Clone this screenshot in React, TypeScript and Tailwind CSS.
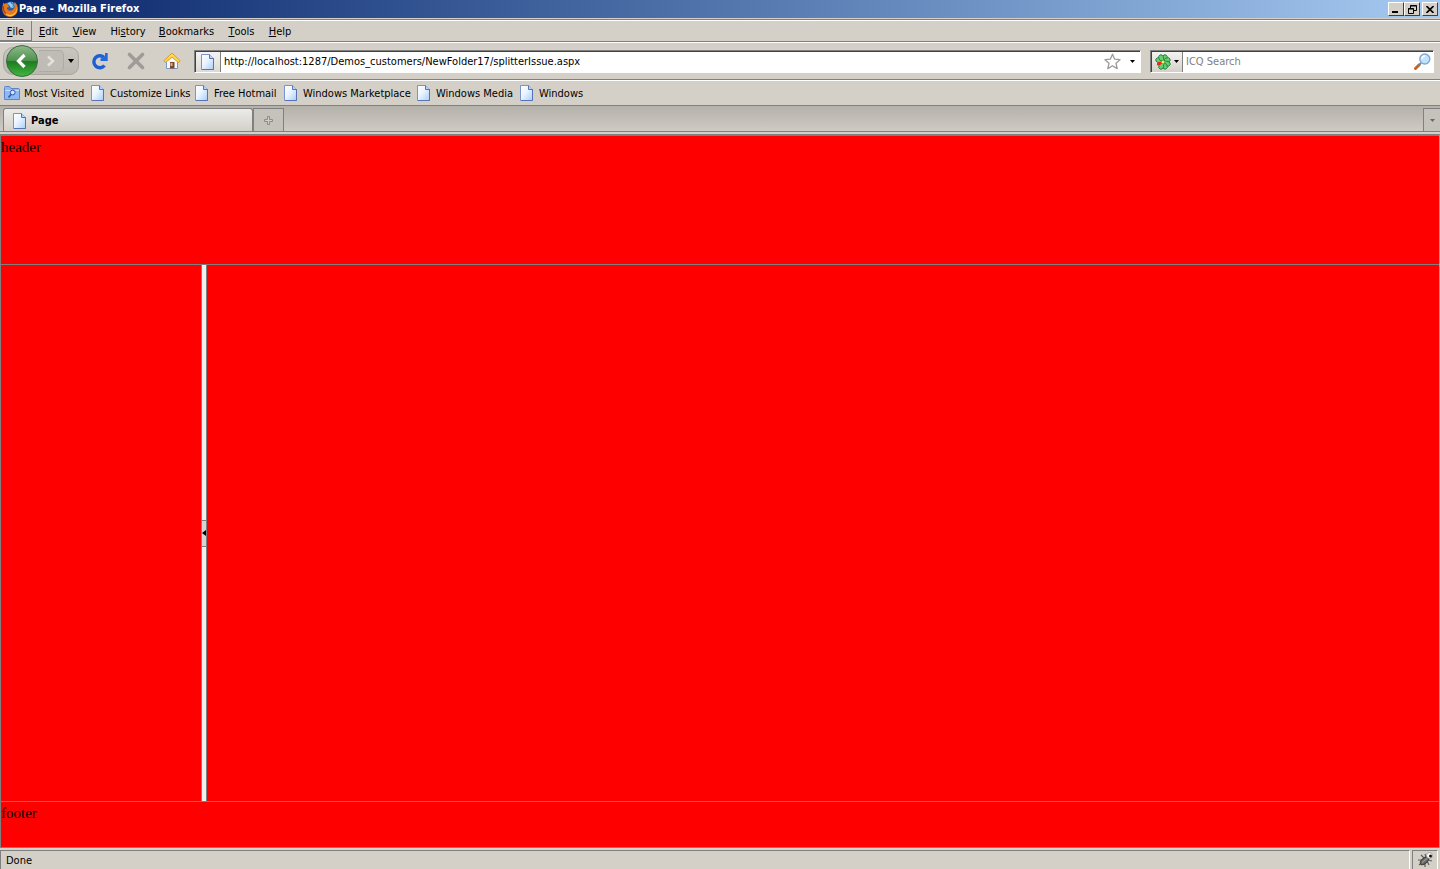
import React from "react";

const menus = [
  { key: "F", before: "", after: "ile", width: "w-[32px]" },
  { key: "E", before: "", after: "dit", width: "w-[33px]" },
  { key: "V", before: "", after: "iew", width: "w-[39px]" },
  { key: "s", before: "Hi", after: "tory", width: "w-[48px]" },
  { key: "B", before: "", after: "ookmarks", width: "w-[69px]" },
  { key: "T", before: "", after: "ools", width: "w-[41px]" },
  { key: "H", before: "", after: "elp", width: "w-[36px]" },
];

const bookmarks = [
  { label: "Customize Links", width: "w-[104px]" },
  { label: "Free Hotmail", width: "w-[89px]" },
  { label: "Windows Marketplace", width: "w-[133px]" },
  { label: "Windows Media", width: "w-[103px]" },
  { label: "Windows", width: "w-[70px]" },
];

function PageIcon() {
  return (
    <svg width="14" height="16" viewBox="0 0 14 16" className="shrink-0" aria-hidden="true">
      <defs>
        <linearGradient id="paper" x1="0" y1="0" x2="1" y2="1">
          <stop offset="0" stopColor="#fff" />
          <stop offset=".45" stopColor="#eaf4ff" />
          <stop offset="1" stopColor="#a9cdfa" />
        </linearGradient>
      </defs>
      <path d="M.5.5h8l4 4v11H.5z" fill="url(#paper)" stroke="#7b93c9" />
      <path d="M12.500 4v11.500H1" fill="none" stroke="#5673b5" />
      <path d="M8.500.5v4h4" fill="#b9d6fa" stroke="#5673b5" />
    </svg>
  );
}

function FirefoxIcon() {
  return (
    <svg width="16" height="16" viewBox="0 0 16 16" className="shrink-0" aria-hidden="true">
      <circle cx="8.500" cy="7" r="6.500" fill="#2a62ae" />
      <path d="M5.500 2.500c2-2 5.500-1.800 7.500.5l-1.500 4-3-.5-1-2z" fill="#8fd0f2" />
      <path d="M9 1l1 2 2-.5-1 3 2 2" stroke="#2f6fb8" fill="none" />
      <path d="M1.500 1.500c.4 1 .8 1.200 1.500 1.300C4 2.200 5 2.200 6 2.600 5.400 3.600 5.800 4.400 7 5c-.3 1.200-1.500 1.200-2.200 2 .2 1.800 1.800 3 3.700 2.800 2.300-.2 4-2 4.200-4.500.2-1.600 0-3-.2-4.200C15 3 16 5.500 15.800 8.500 15.500 12.800 12.200 15.800 8 15.800 3.500 15.800.3 12.500.3 8.200.3 5.800.7 3.500 1.500 1.500z" fill="#e8761b" />
      <path d="M14.500 4.500c1 4-1 8.500-5.500 9.300-3 .5-5.500-1-6.500-3 1 3.200 3.500 4.700 6.500 4.400 4.500-.5 7.300-5.200 5.500-10.700z" fill="#fbc637" />
      <path d="M1.500 5C1 8 2 11 4 12.500" stroke="#b73a12" strokeWidth="1.200" fill="none" />
    </svg>
  );
}

function DownArrow({ className = "" }: { className?: string }) {
  return (
    <svg width="5" height="3" viewBox="0 0 5 3" className={className} aria-hidden="true">
      <path d="M0 0h5L2.500 3z" fill="currentColor" />
    </svg>
  );
}

function BackForward() {
  return (
    <div className="flex h-[28px] w-[76px] items-center rounded-l-[10px] rounded-r-[9px] border border-[#a9a6a0] bg-linear-to-b from-[#c9c6c0] to-[#bab7b1]">
      <button aria-label="Back" className="ml-px shrink-0">
        <svg width="34" height="34" viewBox="0 0 34 34" aria-hidden="true">
          <defs>
            <linearGradient id="back" x1="0" y1="0" x2="0" y2="1">
              <stop offset="0" stopColor="#8fb98a" />
              <stop offset=".48" stopColor="#4f9350" />
              <stop offset=".52" stopColor="#1f7a22" />
              <stop offset="1" stopColor="#43b83f" />
            </linearGradient>
          </defs>
          <circle cx="17" cy="17" r="15.500" fill="url(#back)" stroke="#3c6a40" />
          <path d="M19.500 11l-6 6 6 6" fill="none" stroke="#fff" strokeWidth="3.200" />
        </svg>
      </button>
      <button aria-label="Forward" className="flex h-[22px] w-[25px] shrink-0 items-center justify-center rounded-r-[5px] border border-l-0 border-[#aeaba5] bg-[#bfbcb6]">
        <svg width="10" height="12" viewBox="0 0 10 12" aria-hidden="true">
          <path d="M2 1.500L7 6l-5 4.500" fill="none" stroke="#e4e2de" strokeWidth="2.500" />
        </svg>
      </button>
      <button aria-label="Recent pages" className="flex h-5 flex-1 items-center justify-center">
        <svg width="6" height="4" viewBox="0 0 6 4" aria-hidden="true"><path d="M0 0h6L3 4z" /></svg>
      </button>
    </div>
  );
}

function ReloadIcon() {
  return (
    <svg width="18" height="18" viewBox="0 0 18 18" aria-hidden="true">
      <path d="M12.800 5.200A6 6 0 1 0 13.500 13.500" fill="none" stroke="#1d5fd3" strokeWidth="3.400" />
      <path d="M16.700 1v8H9.500V6.500l2.700-.7L14 3.500V1z" fill="#2468dc" />
    </svg>
  );
}

function StopIcon() {
  return (
    <svg width="18" height="18" viewBox="0 0 18 18" aria-hidden="true">
      <path d="M2.500 2.500l13 13M15.500 2.500l-13 13" stroke="#9f9c97" strokeWidth="3.600" strokeLinecap="round" />
    </svg>
  );
}

function HomeIcon() {
  return (
    <svg width="18" height="18" viewBox="0 0 18 18" aria-hidden="true">
      <path d="M3.500 9v7.500h11V9L9 4z" fill="#f6f8fc" stroke="#7d97c9" />
      <path d="M9 1L.8 8.800l1.700 1.700L9 5.200l6.500 5.300 1.700-1.700z" fill="#ffd64f" stroke="#dd9c25" />
      <path d="M7 10h4.500v6.500H7z" fill="#7a4a2c" />
      <path d="M7.500 11h2v3h-2z" fill="#d9b48a" />
    </svg>
  );
}

function StarIcon() {
  return (
    <svg width="17" height="17" viewBox="0 0 17 17" aria-hidden="true">
      <path d="M8.500 1.200l2.200 5 5.300.5-4 3.600 1.200 5.300-4.700-2.800-4.700 2.800L5 10.300 1 6.700l5.300-.5z" fill="#fff" stroke="#9b9b9b" strokeWidth="1.300" strokeLinejoin="round" />
    </svg>
  );
}

function FlowerIcon() {
  const petals = [22, 67, 112, 157, 202, 292, 337];
  return (
    <svg width="16" height="16" viewBox="0 0 16 16" aria-hidden="true">
      {petals.map((a) => (
        <ellipse key={a} cx="8" cy="3.500" rx="2.400" ry="3.200" fill="#62d070" stroke="#26793a" strokeWidth=".8" transform={`rotate(${a} 8 8)`} />
      ))}
      <ellipse cx="8" cy="4" rx="1.600" ry="2.600" fill="#ee2418" transform="rotate(247 8 8)" />
      <circle cx="8" cy="8" r="1.500" fill="#f7ea5a" />
    </svg>
  );
}

function MagnifierIcon() {
  return (
    <svg width="17" height="17" viewBox="0 0 17 17" aria-hidden="true">
      <path d="M1.500 15.500L5 12" stroke="#c8641b" strokeWidth="3" strokeLinecap="round" />
      <path d="M4.500 12.500l2.500-2.500" stroke="#7a7f8e" strokeWidth="2" />
      <circle cx="10.800" cy="6" r="5" fill="#bfe3fb" stroke="#7fa6dc" strokeWidth="1.400" />
      <path d="M8 6c0-2 1.200-3 3-3" fill="none" stroke="#fff" strokeWidth="1.500" />
    </svg>
  );
}

function BugIcon() {
  return (
    <svg width="17" height="16" viewBox="0 0 17 16" aria-hidden="true">
      <path d="M4 3l3 3M8 2l1 3M1 8l5 0M2 13l4-3M8 15l0-5M12 13l-2-4M15 9l-4-1" stroke="#5c5c5a" strokeWidth="1.200" />
      <ellipse cx="7.500" cy="8.800" rx="5" ry="2.600" transform="rotate(-42 7.500 8.800)" fill="#6d6d6a" stroke="#3c3c3a" />
      <path d="M5 10.500l5-4" stroke="#a4a4a0" />
      <circle cx="12.500" cy="3.500" r="3" fill="#f8f8f5" stroke="#888" strokeWidth=".7" />
      <circle cx="13.500" cy="4" r="1.500" fill="#111" />
    </svg>
  );
}

const caption =
  "flex h-[14px] w-4 items-center justify-center border border-t-white border-l-white border-r-[#404040] border-b-[#404040] bg-[#d4d0c8]";

export default function App() {
  return (
    <div className="flex min-h-screen flex-col bg-[#d4d0c8] font-['DejaVu_Sans_Condensed','DejaVu_Sans',sans-serif] text-[11px] leading-[14px] text-black">
      <header className="flex h-[18px] items-center bg-linear-to-r from-[#0a246a] to-[#a6caf0] pr-[2px] pl-[2px]">
        <FirefoxIcon />
        <h1 className="ml-px flex-1 font-bold text-white">Page - Mozilla Firefox</h1>
        <button aria-label="Minimize" className={caption}>
          <svg width="10" height="8" viewBox="0 0 10 8" aria-hidden="true"><path d="M1 6h6v2H1z" /></svg>
        </button>
        <button aria-label="Restore" className={caption}>
          <svg width="9" height="9" viewBox="0 0 9 9" aria-hidden="true">
            <path d="M2.500 3V.5h6v5H6M2 1h7" fill="none" stroke="#000" />
            <path d="M.5 3.500h5v5h-5zM0 4h6" fill="none" stroke="#000" />
          </svg>
        </button>
        <button aria-label="Close" className={`${caption} ml-[2px]`}>
          <svg width="8" height="7" viewBox="0 0 8 7" aria-hidden="true"><path d="M.5 0l7 7M7.500 0l-7 7" stroke="#000" strokeWidth="1.600" /></svg>
        </button>
      </header>

      <nav aria-label="Menu bar" className="mt-px flex h-[23px] border-y border-t-[#808080] border-b-[#808080]">
        <div className="flex flex-1 border-t border-white">
          {menus.map((m, i) => (
            <button
              key={m.after}
              className={`${m.width} flex shrink-0 items-center justify-center pt-[2px] whitespace-pre ${i === 0 ? "border-r border-b border-[#808080]" : ""}`}
            >
              {m.before}<span className="underline underline-offset-1">{m.key}</span>{m.after}
            </button>
          ))}
        </div>
      </nav>

      <div className="flex h-[38px] items-center border-t border-b border-t-white border-b-[#808080] pr-[6px] pl-[3px]">
        <BackForward />
        <button aria-label="Reload" className="ml-3"><ReloadIcon /></button>
        <button aria-label="Stop" className="ml-[18px]"><StopIcon /></button>
        <button aria-label="Home" className="ml-[18px]"><HomeIcon /></button>
        <div className="ml-[13px] flex h-[23px] flex-1 items-stretch border border-t-[#808080] border-l-[#808080] border-r-white border-b-white bg-white shadow-[inset_1px_1px_0_#404040]">
          <span className="mt-px ml-px flex w-[25px] items-center justify-center border-r border-[#808080] bg-linear-to-b from-[#f4f3f1] to-[#dddad4]"><PageIcon /></span>
          <input
            aria-label="Address"
            defaultValue="http://localhost:1287/Demos_customers/NewFolder17/splitterIssue.aspx"
            className="min-w-0 flex-1 bg-transparent pt-[2px] pl-[3px] outline-none"
          />
          <button aria-label="Bookmark this page" className="mr-[9px]"><StarIcon /></button>
          <button aria-label="Address history" className="mr-[5px]"><DownArrow /></button>
        </div>
        <div className="ml-[9px] flex h-[23px] w-[284px] items-stretch border border-t-[#808080] border-l-[#808080] border-r-white border-b-white bg-white shadow-[inset_1px_1px_0_#404040]">
          <button aria-label="Search engine" className="mt-px ml-px flex w-[31px] items-center justify-center gap-[3px] border-r border-[#808080] bg-linear-to-b from-[#f4f3f1] to-[#d4d0c8]">
            <FlowerIcon /><DownArrow />
          </button>
          <input aria-label="Search" placeholder="ICQ Search" className="min-w-0 flex-1 bg-transparent pt-[2px] pl-[3px] outline-none placeholder:text-[#808080]" />
          <button aria-label="Go" className="mr-[2px]"><MagnifierIcon /></button>
        </div>
      </div>

      <nav aria-label="Bookmarks" className="flex h-[26px] items-center border-t border-b border-t-white border-b-[#808080] pl-1">
        <a href="#most-visited" className="flex w-[87px] items-center gap-[4px] whitespace-nowrap">
          <svg width="16" height="14" viewBox="0 0 16 14" className="shrink-0" aria-hidden="true">
            <path d="M.5 1.500q0-1 1-1h4l1.500 2h7.500q1 0 1 1v10H.5z" fill="#8db8f2" stroke="#5f82cc" />
            <path d="M1 4.500h14" stroke="#c5dcfa" />
            <circle cx="8.700" cy="6.500" r="2.400" fill="#cfe3fc" stroke="#2f56b5" />
            <path d="M7 8.500L4.500 11.500" stroke="#2f56b5" strokeWidth="1.600" />
          </svg>
          <span className="pt-[2px]">Most Visited</span>
        </a>
        {bookmarks.map((b) => (
          <a key={b.label} href="#bookmark" className={`${b.width} flex shrink-0 items-center gap-[5px] whitespace-nowrap`}>
            <PageIcon />
            <span className="pt-[2px]">{b.label}</span>
          </a>
        ))}
      </nav>

      <div role="tablist" className="flex h-[26px] items-end border-b border-[#808080] bg-linear-to-b from-[#b4b1aa] to-[#cfcbc4] pl-[3px]">
        <button role="tab" aria-selected="true" className="flex h-[23px] w-[250px] items-center gap-[4px] rounded-t-[3px] border border-b-0 border-[#808080] bg-linear-to-b from-[#ecebe8] to-[#d4d0c8] pt-px pl-[9px] font-bold">
          <PageIcon />
          <span>Page</span>
        </button>
        <button aria-label="New tab" className="flex h-[23px] w-[31px] items-center justify-center border border-b-0 border-[#808080] bg-[#c5c2bb]">
          <svg width="9" height="9" viewBox="0 0 9 9" aria-hidden="true">
            <path d="M3.500.5h2v3h3v2h-3v3h-2v-3h-3v-2h3z" fill="#d0cdc7" stroke="#8f8c86" />
          </svg>
        </button>
        <button aria-label="All tabs" className="ml-auto flex h-[23px] w-[17px] items-center justify-center border border-r-0 border-b-0 border-[#808080] bg-[#c5c2bb] text-[#6b6862]">
          <DownArrow />
        </button>
      </div>

      <main className="mt-[2px] flex flex-1 flex-col border-t-2 border-r border-l border-[#808080] border-r-[#b0aca4] bg-[#ff0000] font-['Liberation_Serif',serif] text-[15px] leading-[20px]">
        <section className="h-[129px] border-b border-[#808080] pt-px">header</section>
        <section className="flex flex-1 border-b border-[#808080]">
          <div className="w-[200px]" />
          <div role="separator" aria-orientation="vertical" className="flex w-[6px] flex-col justify-center border-x border-[#808080] bg-[#f0f0f0]">
            <button aria-label="Collapse pane" className="flex h-[27px] items-center justify-end border-y border-[#808080] bg-[#d4d4d4]">
              <svg width="4" height="6" viewBox="0 0 4 6" aria-hidden="true"><path d="M4 0v6L0 3z" /></svg>
            </button>
          </div>
          <div className="flex-1" />
        </section>
        <section className="h-[46px] border-b border-[#808080] pt-px">footer</section>
      </main>

      <footer className="flex h-[21px] items-stretch gap-[2px] pt-[2px] pr-[2px]">
        <div className="flex flex-1 items-center border border-b-0 border-t-[#808080] border-l-[#808080] border-r-white pt-[2px] pl-[5px]">Done</div>
        <button aria-label="Debugger" className="flex w-[26px] items-center justify-center border border-b-0 border-t-[#808080] border-l-[#808080] border-r-white"><BugIcon /></button>
      </footer>
    </div>
  );
}
